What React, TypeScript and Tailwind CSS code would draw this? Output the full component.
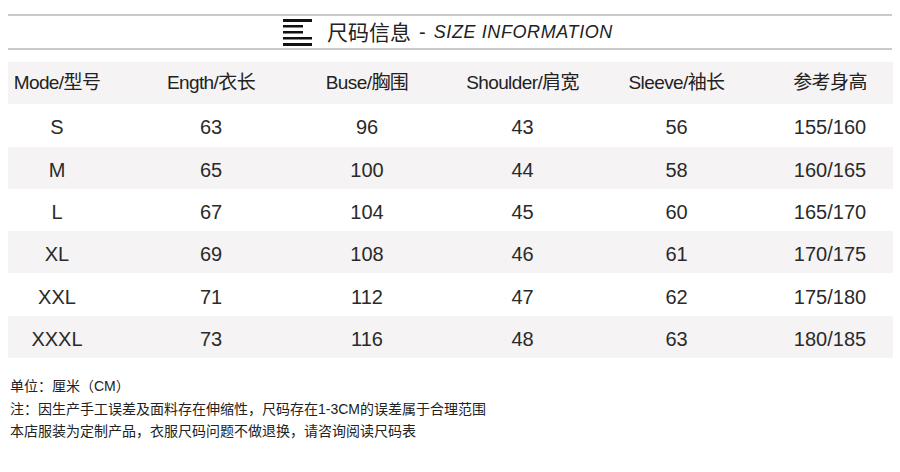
import React from "react";

const rows = [
  ["S", "63", "96", "43", "56", "155/160"],
  ["M", "65", "100", "44", "58", "160/165"],
  ["L", "67", "104", "45", "60", "165/170"],
  ["XL", "69", "108", "46", "61", "170/175"],
  ["XXL", "71", "112", "47", "62", "175/180"],
  ["XXXL", "73", "116", "48", "63", "180/185"],
];

const headers = ["Mode/型号", "Ength/衣长", "Buse/胸围", "Shoulder/肩宽", "Sleeve/袖长", "参考身高"];

const cellPad = ["pr-[27px]", "", "", "", "", "pl-[14px]"];

const MenuIcon = () => (
  <svg width="30" height="27" viewBox="0 0 30 27" className="shrink-0">
    <rect x="0" y="0" width="29" height="3" fill="#111" />
    <rect x="0" y="6" width="20" height="2.5" fill="#111" />
    <rect x="0" y="12" width="20" height="2.5" fill="#111" />
    <rect x="0" y="18" width="29" height="2.5" fill="#111" />
    <rect x="0" y="24" width="29" height="3" fill="#111" />
  </svg>
);

export default function App() {
  return (
    <div
      className="w-[900px] h-[472px] bg-white text-[#222] overflow-hidden"
      style={{ fontFamily: '"Liberation Sans", "Noto Sans CJK SC", sans-serif' }}
    >
      <div className="pt-[14px] px-[8px]">
        <div className="border-t-2 border-[#c9c9c9]" />
        <div className="h-[32px] flex items-center justify-center gap-[14px] pr-[4px]">
          <MenuIcon />
          <div className="flex items-center text-[20px] leading-none">
            <span className="text-[21px]">尺码信息</span>
            <span className="ml-[8px]">-</span>
            <span className="ml-[8px] italic text-[18px] tracking-[0.6px]">SIZE INFORMATION</span>
          </div>
        </div>
        <div className="border-t-2 border-[#c9c9c9]" />

        <div className="mt-[12px] grid grid-cols-[125px_156px_156px_155px_153px_140px]">
          {headers.map((h, i) => (
            <div
              key={h}
              className={`h-[42.3px] bg-[#f5f3f4] flex items-center justify-center text-[19px] tracking-[-0.6px] ${cellPad[i]}`}
            >
              {h}
            </div>
          ))}
          {rows.map((r, ri) =>
            r.map((v, ci) => (
              <div
                key={`${ri}-${ci}`}
                className={`h-[42.3px] flex items-center justify-center pt-[4px] text-[20px] text-[#2a2a2a] ${
                  ri % 2 === 1 ? "bg-[#f5f3f4]" : "bg-white"
                } ${cellPad[ci]} ${ci === 5 ? "pt-[0px]" : ""}`}
              >
                {v}
              </div>
            ))
          )}
        </div>
      </div>

      <div className="mt-[17px] pl-[10px] text-[14px] leading-[22.5px] text-[#222]">
        <div>单位：厘米（CM）</div>
        <div>注：因生产手工误差及面料存在伸缩性，尺码存在1-3CM的误差属于合理范围</div>
        <div>本店服装为定制产品，衣服尺码问题不做退换，请咨询阅读尺码表</div>
      </div>
    </div>
  );
}
